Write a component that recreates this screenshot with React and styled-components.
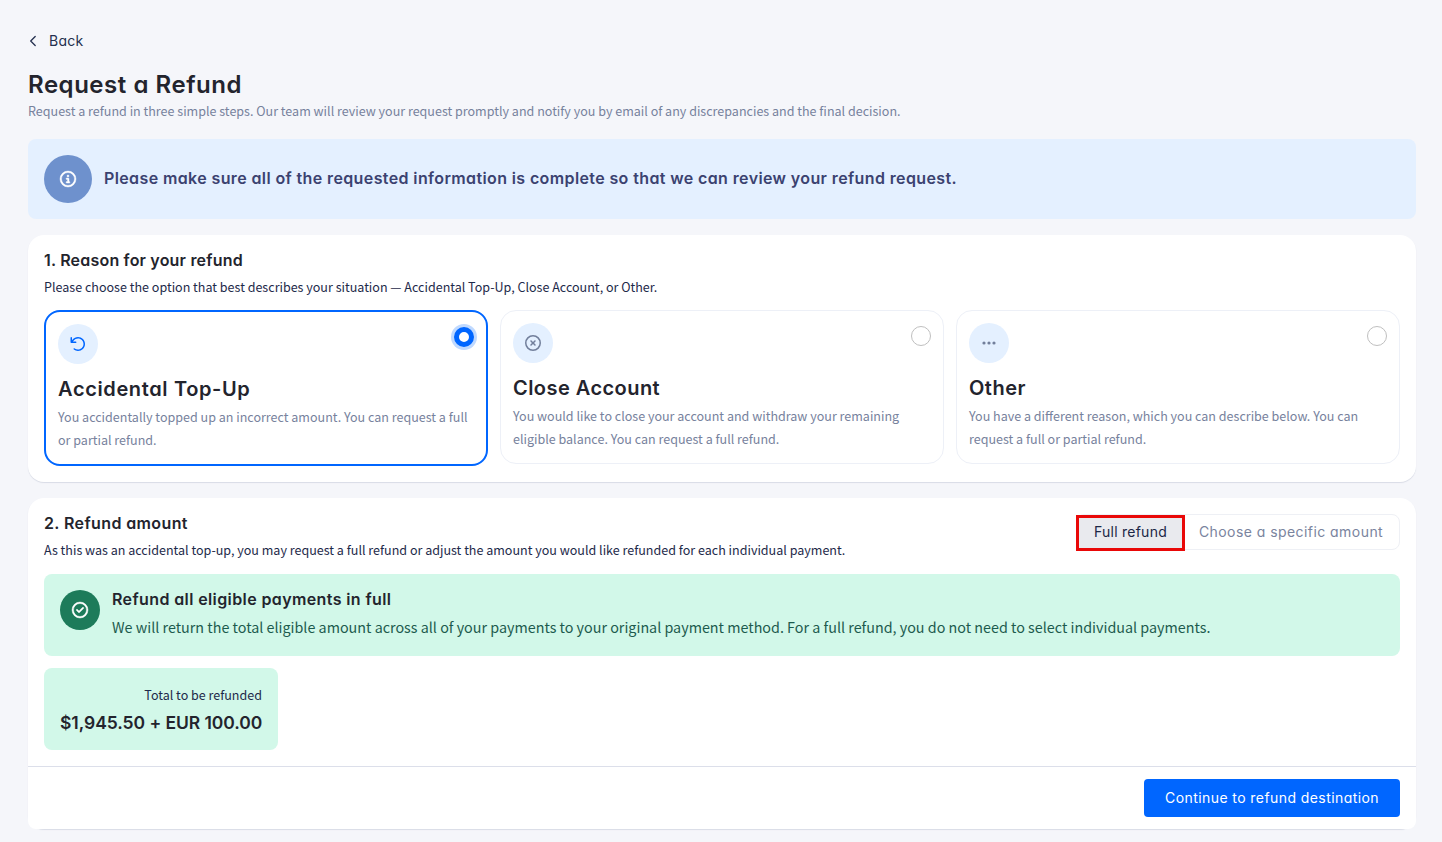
import React, { Component } from 'react';
import styled, { createGlobalStyle, css } from 'styled-components';
import { FaRegCircleCheck, FaRegCircleXmark } from 'react-icons/fa6';

const bodyFont = '"Noto Sans CJK SC", "Noto Sans", sans-serif';

// geometric heading face: single-storey "a"
const headingFont = css`
    font-family: Inter, "Open Sans", sans-serif;
    font-feature-settings: "cv11" 1;
`;

const GlobalStyle = createGlobalStyle`
    * {
        box-sizing: border-box;
    }
    body {
        margin: 0;
        background: #f5f6fa;
        color: #1e2a4a;
        font-family: ${bodyFont};
        font-size: 12.54px;
    }
    h1, h2, h3, p {
        margin: 0;
    }
    svg {
        display: block;
    }
`;

const Page = styled.main`
    height: 842px;
    padding: 27px 26px 0 28px;
    overflow: hidden;
`;

const BackLink = styled.a`
    ${headingFont}
    display: flex;
    align-items: center;
    gap: 12px;
    height: 27px;
    padding-left: 1px;
    color: #24304f;
    font-size: 14px;
    letter-spacing: 0.25px;
    cursor: pointer;
`;

const Title = styled.h1`
    ${headingFont}
    margin-top: 14px;
    height: 33px;
    line-height: 33px;
    font-size: 24px;
    font-weight: 600;
    letter-spacing: 0.54px;
    color: #23242d;
`;

const Subtitle = styled.p`
    height: 21px;
    line-height: 19px;
    color: #77829d;
`;

const Notice = styled.div`
    display: flex;
    align-items: center;
    gap: 12px;
    height: 80px;
    margin-top: 17px;
    padding: 16px;
    border-radius: 8px;
    background: #e4f0ff;
`;

const NoticeText = styled.p`
    ${headingFont}
    padding-bottom: 2px;
    font-size: 16px;
    font-weight: 600;
    line-height: 24px;
    letter-spacing: 0.383px;
    color: #3b4270;
`;

const IconCircle = styled.span`
    display: flex;
    flex: none;
    align-items: center;
    justify-content: center;
    width: ${props => props.$size}px;
    height: ${props => props.$size}px;
    border-radius: 50%;
    background: ${props => props.$bg};
    color: ${props => props.$color};
    svg {
        overflow: visible;
        stroke: currentColor;
        stroke-width: ${props => props.$bold ? 14 : 0};
    }
`;

const Card = styled.section`
    margin-top: 16px;
    border-radius: 16px;
    background: #fff;
    box-shadow: 0 1px 1px #d9dce6;
`;

const ReasonCard = styled(Card)`
    height: 247px;
    padding: 13px 16px 0;
`;

const AmountCard = styled(Card)`
    height: 331px;
    padding-top: 13px;
`;

const SectionTitle = styled.h2`
    ${headingFont}
    height: 24px;
    line-height: 24px;
    font-size: 16px;
    font-weight: 600;
    letter-spacing: ${props => props.$tracking || 0.39}px;
    color: #23242d;
`;

const SectionText = styled.p`
    height: 22px;
    margin-top: 4px;
    line-height: 21px;
`;

const Options = styled.div`
    display: grid;
    grid-template-columns: repeat(3, 444px);
    align-items: start;
    gap: 12px;
    margin-top: 12px;
`;

const Option = styled.div`
    height: ${props => props.$selected ? 156 : 154}px;
    padding: 12px;
    border: ${props => props.$selected ? '2px solid #0066ff' : '1px solid #edf0f7'};
    border-radius: 16px;
    cursor: pointer;
`;

const OptionTop = styled.div`
    display: flex;
    align-items: flex-start;
    justify-content: space-between;
`;

const Radio = styled.span`
    width: 20px;
    height: 20px;
    margin-top: 3px;
    border: ${props => props.$selected ? '5px solid #0066ff' : '1px solid #bfbfbf'};
    border-radius: 50%;
    background: #fff;
    box-shadow: ${props => props.$selected ? '0 0 0 3px #bfd9ff' : 'none'};
`;

const OptionTitle = styled.h3`
    ${headingFont}
    margin-top: 10px;
    height: 30px;
    line-height: 30px;
    font-size: 20px;
    font-weight: 600;
    letter-spacing: ${props => props.$tracking}px;
    color: #23242d;
`;

const OptionText = styled.p`
    margin-top: 1px;
    line-height: 23px;
    color: #77829d;
`;

const AmountHeader = styled.div`
    display: flex;
    justify-content: space-between;
    padding: 0 16px;
`;

const Switcher = styled.div`
    display: flex;
    width: 324px;
    height: 36px;
    margin-top: 3px;
    border: 1px solid #eef0f5;
    border-radius: 8px;
`;

const SwitchButton = styled.button`
    ${headingFont}
    flex: 1;
    padding: 0 2px 0 0;
    border: none;
    background: none;
    font-size: 14px;
    line-height: 34px;
    letter-spacing: 0.44px;
    color: #7a849e;
    white-space: nowrap;
    cursor: pointer;
`;

const ActiveSwitchButton = styled(SwitchButton)`
    flex: none;
    width: 109px;
    height: 36px;
    margin-left: -1px;
    padding: 0 0 2px;
    border: 3px solid #e90808;
    background: #e9eaee;
    line-height: 28px;
    letter-spacing: 0.24px;
    color: #1b2746;
`;

const Eligible = styled.div`
    display: flex;
    align-items: flex-start;
    gap: 12px;
    height: 82px;
    margin: 13px 16px 0;
    padding: 16px;
    border-radius: 8px;
    background: #d2f8e9;
`;

const EligibleTitle = styled(SectionTitle)`
    margin-top: -3px;
`;

const EligibleText = styled.p`
    margin-top: 4px;
    font-size: 14.33px;
    line-height: 24px;
    color: #1d5b4e;
`;

const Total = styled.div`
    width: 234px;
    height: 82px;
    margin: 12px 16px 0;
    padding: 16px;
    border-radius: 8px;
    background: #d2f8e9;
    text-align: right;
`;

const TotalLabel = styled.p`
    height: 23px;
    line-height: 21px;
`;

const TotalValue = styled.p`
    ${headingFont}
    margin-top: 2px;
    line-height: 27px;
    font-size: 17.5px;
    font-weight: 600;
    letter-spacing: -0.06px;
    color: #23242d;
    white-space: nowrap;
`;

const Footer = styled.footer`
    display: flex;
    justify-content: flex-end;
    height: 63px;
    margin-top: 16px;
    padding: 12px 16px;
    border-top: 1px solid #dcdfea;
    border-radius: 0 0 8px 8px;
    background: #fff;
`;

const Continue = styled.button`
    ${headingFont}
    width: 256px;
    height: 38px;
    padding: 0 0 2px;
    border: none;
    border-radius: 4px;
    background: #0066ff;
    color: #fff;
    font-size: 14px;
    letter-spacing: 0.42px;
    cursor: pointer;
`;

const InfoIcon = () => (
    <svg width="16" height="16" viewBox="0 0 512 512" fill="currentColor">
        <path d="M464 256A208 208 0 1 0 48 256a208 208 0 1 0 416 0zM0 256a256 256 0 1 1 512 0A256 256 0 1 1 0 256z" />
        <path d="M216 336h24V272H216c-13.3 0-24-10.7-24-24s10.7-24 24-24h48c13.3 0 24 10.7 24 24v88h8c13.3 0 24 10.7 24 24s-10.7 24-24 24H216c-13.3 0-24-10.7-24-24s10.7-24 24-24zm40-208a32 32 0 1 1 0 64 32 32 0 1 1 0-64z" />
    </svg>
);

const UndoIcon = () => (
    <svg width="16" height="16" viewBox="0 0 512 512" fill="currentColor">
        <path d="M40 224c-13.3 0-24-10.7-24-24V56c0-13.3 10.7-24 24-24s24 10.7 24 24v80.1l20-23.5C125 63.4 186.9 32 256 32c123.7 0 224 100.3 224 224s-100.3 224-224 224c-50.4 0-97-16.7-134.4-44.8c-10.6-8-12.7-23-4.8-33.6s23-12.7 33.6-4.8C179.8 418.9 216.3 432 256 432c97.2 0 176-78.8 176-176s-78.8-176-176-176c-54.3 0-102.9 24.6-135.2 63.4L93.1 176H184c13.3 0 24 10.7 24 24s-10.7 24-24 24H40z" />
    </svg>
);

const DotsIcon = () => (
    <svg width="16" height="16" viewBox="0 0 16 16" fill="currentColor">
        <circle cx="3" cy="8" r="1.6" />
        <circle cx="8" cy="8" r="1.6" />
        <circle cx="13" cy="8" r="1.6" />
    </svg>
);

const ChevronIcon = () => (
    <svg width="8" height="12" viewBox="0 0 8 12" fill="none" stroke="currentColor" strokeWidth="1.3" strokeLinecap="round" strokeLinejoin="round">
        <path d="M6.2 1.5L1.7 6L6.2 10.5" />
    </svg>
);

const reasons = [
    {
        title: 'Accidental Top-Up',
        text: 'You accidentally topped up an incorrect amount. You can request a full or partial refund.',
        icon: <UndoIcon />,
        tracking: 0.63,
    },
    {
        title: 'Close Account',
        text: 'You would like to close your account and withdraw your remaining eligible balance. You can request a full refund.',
        icon: <FaRegCircleXmark size={16} />,
        tracking: 0.45,
    },
    {
        title: 'Other',
        text: 'You have a different reason, which you can describe below. You can request a full or partial refund.',
        icon: <DotsIcon />,
        tracking: 0.5,
    },
];

class App extends Component {
    state = { reason: 0 }

    render() {
        const { reason } = this.state;
        return (
            <Page>
                <GlobalStyle />
                <BackLink><ChevronIcon />Back</BackLink>
                <Title>Request a Refund</Title>
                <Subtitle>Request a refund in three simple steps. Our team will review your request promptly and notify you by email of any discrepancies and the final decision.</Subtitle>
                <Notice>
                    <IconCircle $size={48} $bg="#6e91cd" $color="#fff" $bold><InfoIcon /></IconCircle>
                    <NoticeText>Please make sure all of the requested information is complete so that we can review your refund request.</NoticeText>
                </Notice>

                <ReasonCard>
                    <SectionTitle $tracking={0.2}>1. Reason for your refund</SectionTitle>
                    <SectionText>Please choose the option that best describes your situation — Accidental Top-Up, Close Account, or Other.</SectionText>
                    <Options>
                        {reasons.map((item, i) => (
                            <Option key={item.title} $selected={i === reason} onClick={() => this.setState({ reason: i })}>
                                <OptionTop>
                                    <IconCircle $size={40} $bg="#e4f0ff" $color={i === reason ? '#0066ff' : '#727f9b'}>{item.icon}</IconCircle>
                                    <Radio $selected={i === reason} />
                                </OptionTop>
                                <OptionTitle $tracking={item.tracking}>{item.title}</OptionTitle>
                                <OptionText>{item.text}</OptionText>
                            </Option>
                        ))}
                    </Options>
                </ReasonCard>

                <AmountCard>
                    <AmountHeader>
                        <div>
                            <SectionTitle>2. Refund amount</SectionTitle>
                            <SectionText>As this was an accidental top-up, you may request a full refund or adjust the amount you would like refunded for each individual payment.</SectionText>
                        </div>
                        <Switcher>
                            <ActiveSwitchButton>Full refund</ActiveSwitchButton>
                            <SwitchButton>Choose a specific amount</SwitchButton>
                        </Switcher>
                    </AmountHeader>
                    <Eligible>
                        <IconCircle $size={40} $bg="#1d7b5a" $color="#fff" $bold><FaRegCircleCheck size={16} /></IconCircle>
                        <div>
                            <EligibleTitle>Refund all eligible payments in full</EligibleTitle>
                            <EligibleText>We will return the total eligible amount across all of your payments to your original payment method. For a full refund, you do not need to select individual payments.</EligibleText>
                        </div>
                    </Eligible>
                    <Total>
                        <TotalLabel>Total to be refunded</TotalLabel>
                        <TotalValue>$1,945.50 + EUR 100.00</TotalValue>
                    </Total>
                    <Footer>
                        <Continue>Continue to refund destination</Continue>
                    </Footer>
                </AmountCard>
            </Page>
        );
    }
}

export default App;
